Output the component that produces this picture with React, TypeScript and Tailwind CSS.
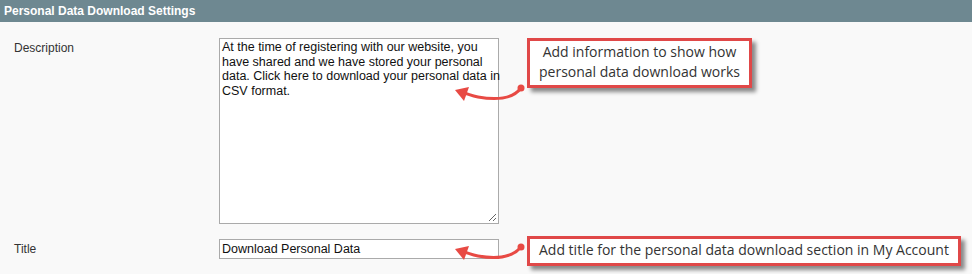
export default function App() {
  return (
    <div className="relative w-[972px] h-[274px] overflow-hidden bg-[#f9f9f9] font-['Liberation_Sans',Arial,sans-serif]">
      <div className="h-[22px] bg-[#6e8891] pl-[4px] text-[12px] font-bold leading-[22px] text-white">
        Personal Data Download Settings
      </div>

      <div className="flex pt-[16px]">
        <div className="w-[219px] pl-[14px] pt-[3px] text-[12px] leading-[14px] text-[#333]">Description</div>
        <div className="relative h-[186px] w-[280px] whitespace-nowrap border border-[#aaa] bg-white px-[2px] pt-[1px] text-[12.5px] leading-[14.5px] text-[#111]">
          At the time of registering with our website, you
          <br />
          have shared and we have stored your personal
          <br />
          data. Click here to download your personal data in
          <br />
          CSV format.
          <svg className="absolute bottom-[1px] right-[1px]" width="9" height="9">
            <g stroke="#666" strokeWidth="1">
              <path d="M1 8 L8 1" />
              <path d="M5 8 L8 5" />
            </g>
          </svg>
        </div>
        <div className="ml-[28px]">
          <Callout>
            Add information to show how
            <br />
            personal data download works
          </Callout>
        </div>
      </div>

      <div className="flex pt-[15px]">
        <div className="w-[219px] pl-[14px] pt-[3px] text-[12px] leading-[14px] text-[#333]">Title</div>
        <div className="h-[20px] w-[280px] border border-[#aaa] bg-white px-[2px] text-[12.5px] leading-[18px] text-[#111]">
          Download Personal Data
        </div>
        <div className="ml-[28px] -mt-[3px]">
          <Callout>Add title for the personal data download section in My Account</Callout>
        </div>
      </div>

      {/* annotation arrows */}
      <svg className="pointer-events-none absolute left-0 top-0" width="972" height="274">
        <g fill="#e84a44" stroke="#e84a44" strokeWidth="3" strokeLinecap="round">
          <circle cx="521" cy="88" r="3.5" stroke="none" />
          <path d="M521 88 C512 100 495 100 478 97 C472 96 468 94 464 93" fill="none" />
          <path d="M455 90 L469 87 L464 101 Z" stroke="none" />
          <circle cx="521" cy="247" r="3.5" stroke="none" />
          <path d="M521 247 C512 258 495 259 478 256 C472 255 468 253 464 252" fill="none" />
          <path d="M455 249 L469 246 L464 260 Z" stroke="none" />
        </g>
      </svg>
    </div>
  )
}

function Callout({ children }: { children: React.ReactNode }) {
  return (
    <div className="border-[3px] border-[#e04848] bg-white px-[9px] pt-[1px] pb-[3px] text-center font-['Open_Sans','Lato',sans-serif] text-[14px] leading-[20px] text-[#333] shadow-[4px_4px_4px_rgba(0,0,0,0.45)] whitespace-nowrap">
      {children}
    </div>
  )
}
